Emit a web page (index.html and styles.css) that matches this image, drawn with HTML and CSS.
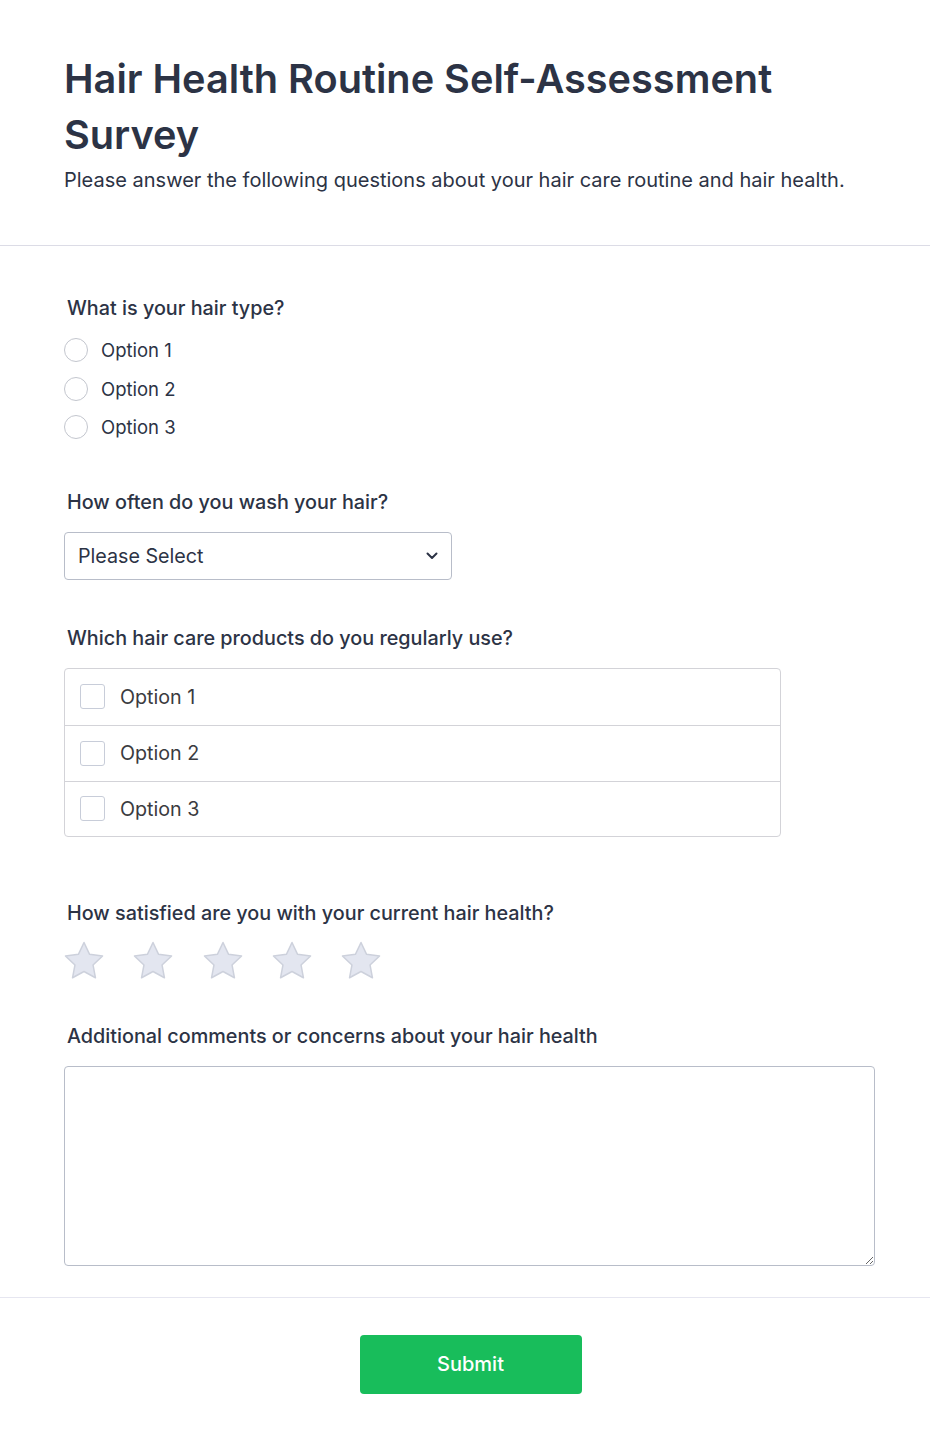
FILE: index.html
```html
<!DOCTYPE html>
<html lang="en">
<head>
<meta charset="utf-8">
<title>Hair Health Routine Self-Assessment Survey</title>
<link rel="stylesheet" href="styles.css">
</head>
<body>
<div class="page">
  <header class="header">
    <h1 class="title">Hair Health Routine Self-Assessment Survey</h1>
    <p class="subtitle">Please answer the following questions about your hair care routine and hair health.</p>
  </header>

  <main class="form">
    <section class="question q-radio">
      <div class="label">What is your hair type?</div>
      <div class="radio-list">
        <label class="radio-row"><span class="radio"></span><span>Option 1</span></label>
        <label class="radio-row"><span class="radio"></span><span>Option 2</span></label>
        <label class="radio-row"><span class="radio"></span><span>Option 3</span></label>
      </div>
    </section>

    <section class="question q-select">
      <div class="label">How often do you wash your hair?</div>
      <div class="select">
        <span>Please Select</span>
        <svg class="chevron" width="12" height="8" viewBox="0 0 12 8"><path d="M1.5 1.5 L6 6 L10.5 1.5" fill="none" stroke="#2c3345" stroke-width="2" stroke-linecap="round" stroke-linejoin="round"/></svg>
      </div>
    </section>

    <section class="question q-check">
      <div class="label">Which hair care products do you regularly use?</div>
      <div class="check-list">
        <label class="check-row"><span class="checkbox"></span><span>Option 1</span></label>
        <label class="check-row"><span class="checkbox"></span><span>Option 2</span></label>
        <label class="check-row"><span class="checkbox"></span><span>Option 3</span></label>
      </div>
    </section>

    <section class="question q-stars">
      <div class="label">How satisfied are you with your current hair health?</div>
      <div class="stars">
        <svg class="star" viewBox="0 0 40 40"><path d="M20 1.5 L25.59 13.31 L38.55 14.97 L29.03 23.94 L31.46 36.78 L20 30.5 L8.54 36.78 L10.97 23.94 L1.45 14.97 L14.41 13.31 Z"/></svg>
        <svg class="star" viewBox="0 0 40 40"><path d="M20 1.5 L25.59 13.31 L38.55 14.97 L29.03 23.94 L31.46 36.78 L20 30.5 L8.54 36.78 L10.97 23.94 L1.45 14.97 L14.41 13.31 Z"/></svg>
        <svg class="star" viewBox="0 0 40 40"><path d="M20 1.5 L25.59 13.31 L38.55 14.97 L29.03 23.94 L31.46 36.78 L20 30.5 L8.54 36.78 L10.97 23.94 L1.45 14.97 L14.41 13.31 Z"/></svg>
        <svg class="star" viewBox="0 0 40 40"><path d="M20 1.5 L25.59 13.31 L38.55 14.97 L29.03 23.94 L31.46 36.78 L20 30.5 L8.54 36.78 L10.97 23.94 L1.45 14.97 L14.41 13.31 Z"/></svg>
        <svg class="star" viewBox="0 0 40 40"><path d="M20 1.5 L25.59 13.31 L38.55 14.97 L29.03 23.94 L31.46 36.78 L20 30.5 L8.54 36.78 L10.97 23.94 L1.45 14.97 L14.41 13.31 Z"/></svg>
      </div>
    </section>

    <section class="question q-text">
      <div class="label">Additional comments or concerns about your hair health</div>
      <textarea class="textarea"></textarea>
    </section>
  </main>

  <footer class="footer">
    <button class="submit" type="button">Submit</button>
  </footer>
</div>
</body>
</html>
```

FILE: styles.css
```css
* { box-sizing: border-box; }

html, body {
  margin: 0;
  padding: 0;
  background: #ffffff;
}

body {
  font-family: Inter, "Noto Sans", "Liberation Sans", sans-serif;
  color: #2c3345;
}

.page {
  width: 930px;
}

.header {
  padding: 51px 64px 50px;
  border-bottom: 1px solid #dcdce6;
}

.title {
  margin: 0;
  font-size: 39.7px;
  line-height: 56px;
  font-weight: 600;
  color: #2c3345;
}

.subtitle {
  margin: 2px 0 0;
  font-size: 20px;
  line-height: 30px;
  font-weight: 400;
  color: #2c3345;
}

.form {
  padding: 47px 55px 31px 64px;
  border-bottom: 1px solid #e6e6f0;
  display: flex;
  flex-direction: column;
}

.question {
  display: flex;
  flex-direction: column;
}

.label {
  font-size: 19.8px;
  line-height: 30px;
  font-weight: 500;
  color: #2c3345;
  padding-left: 3px;
}

/* radios */
.radio-list {
  margin-top: 8px;
  display: flex;
  flex-direction: column;
}

.radio-row {
  height: 38.5px;
  display: flex;
  align-items: center;
  gap: 13px;
  font-size: 18.5px;
  color: #2c3345;
}

.radio {
  width: 24px;
  height: 24px;
  border-radius: 50%;
  border: 1px solid #c3c6ce;
  background: #fff;
}

/* select */
.q-select {
  margin-top: 40px;
}

.select {
  margin-top: 15px;
  width: 388px;
  height: 48px;
  border: 1px solid #b8bdc9;
  border-radius: 4px;
  display: flex;
  align-items: center;
  justify-content: space-between;
  padding: 1px 13px 0 13px;
  font-size: 19.7px;
  color: #2c3345;
}

.chevron {
  display: block;
}

/* checkboxes */
.q-check {
  margin-top: 43px;
}

.check-list {
  margin-top: 15px;
  width: 717px;
  border: 1px solid #d3d3d8;
  border-radius: 4px;
  display: flex;
  flex-direction: column;
}

.check-row {
  height: 56px;
  flex: none;
  display: flex;
  align-items: center;
  gap: 15px;
  padding-left: 15px;
  font-size: 19.7px;
  color: #3b3b40;
  border-top: 1px solid #d3d3d8;
}

.check-row:first-child {
  border-top: none;
}

.check-row:last-child {
  height: 55px;
}

.checkbox {
  width: 25px;
  height: 25px;
  border: 1px solid #c8cdd9;
  border-radius: 3px;
  background: #fff;
}

/* stars */
.q-stars {
  margin-top: 61px;
}

.stars {
  margin-top: 13px;
  display: flex;
  gap: 29.3px;
}

.star {
  width: 40px;
  height: 40px;
  display: block;
}

.star path {
  fill: #e3e6f0;
  stroke: #cdd1dc;
  stroke-width: 1.5;
  stroke-linejoin: round;
}

/* textarea */
.q-text {
  margin-top: 40px;
}

.textarea {
  margin-top: 15px;
  width: 811px;
  height: 200px;
  border: 1px solid #b8bdc9;
  border-radius: 4px;
  font-family: inherit;
  font-size: 16px;
  resize: vertical;
  display: block;
}

/* footer */
.footer {
  padding: 37px 0 50px;
  display: flex;
  justify-content: center;
}

.submit {
  width: 222px;
  height: 59px;
  margin-left: 11px;
  background: #18bd5b;
  border: none;
  border-radius: 4px;
  color: #ffffff;
  font-family: inherit;
  font-size: 20px;
  font-weight: 500;
}
```
